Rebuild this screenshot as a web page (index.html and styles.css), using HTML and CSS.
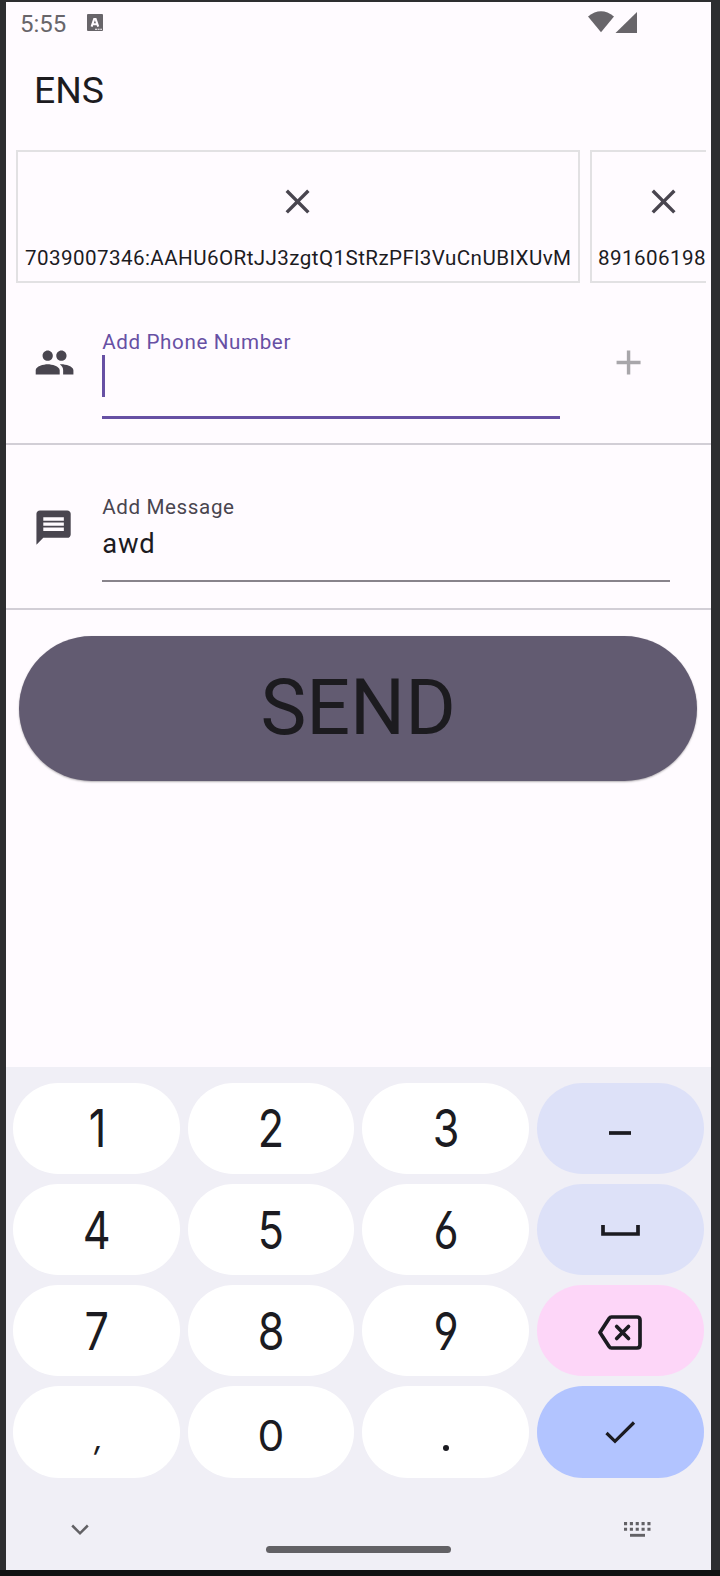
FILE: index.html
```html
<!DOCTYPE html>
<html lang="en">
<head>
<meta charset="utf-8">
<title>ENS</title>
<link rel="stylesheet" href="styles.css">
</head>
<body>
<main class="screen">
  <header class="status">
    <span class="clock">5:55</span>
    <svg class="badge" viewBox="0 0 16 17"><rect width="16" height="17" rx="1" fill="#68656a"/><path d="M4.600 12.600 7.200 5h1.400L11.200 12.600M5.800 10.200h4.200" fill="none" stroke="#fffbff" stroke-width="2.100"/><path d="M8 15.200h7" stroke="#fffbff" stroke-width="1.100" stroke-dasharray="2 .6"/></svg>
    <svg class="signals" viewBox="0 0 50 22"><path d="M0 5.500Q13-5 26 5.500L13 21.300z" fill="#68656a"/><path d="M49 1v21H27.500z" fill="#68656a"/></svg>
  </header>
  <h1 class="title">ENS</h1>
  <section class="tokens">
    <div class="token token-long">
      <svg class="icon" viewBox="0 0 24 24"><path d="M19 6.410 17.590 5 12 10.590 6.410 5 5 6.410 10.590 12 5 17.590 6.410 19 12 13.410 17.590 19 19 17.590 13.410 12z"/></svg>
      <span>7039007346:AAHU6ORtJJ3zgtQ1StRzPFl3VuCnUBIXUvM</span>
    </div>
    <div class="token token-short">
      <svg class="icon" viewBox="0 0 24 24"><path d="M19 6.410 17.590 5 12 10.590 6.410 5 5 6.410 10.590 12 5 17.590 6.410 19 12 13.410 17.590 19 19 17.590 13.410 12z"/></svg>
      <span>891606198</span>
    </div>
  </section>
  <section class="row row-phone">
    <svg class="icon" viewBox="0 0 24 24"><path d="M16 11c1.660 0 2.990-1.340 2.990-3S17.660 5 16 5s-3 1.340-3 3 1.340 3 3 3zm-8 0c1.660 0 2.990-1.340 2.990-3S9.660 5 8 5 5 6.340 5 8s1.340 3 3 3zm0 2c-2.330 0-7 1.170-7 3.500V19h14v-2.500c0-2.330-4.670-3.500-7-3.500zm8 0c-.290 0-.620.020-.970.050 1.160.840 1.970 1.970 1.970 3.450V19h6v-2.500c0-2.330-4.670-3.500-7-3.500z"/></svg>
    <div class="field focused">
      <label>Add Phone Number</label>
      <div class="caret"></div>
    </div>
    <svg class="icon add" viewBox="0 0 24 24"><path d="M19 13h-6v6h-2v-6H5v-2h6V5h2v6h6z"/></svg>
  </section>
  <section class="row row-message">
    <svg class="icon" viewBox="0 0 24 24"><path d="M20 2H4c-1.100 0-1.990.900-1.990 2L2 22l4-4h14c1.100 0 2-.900 2-2V4c0-1.100-.900-2-2-2zm-2 12H6v-2h12v2zm0-3H6V9h12v2zm0-3H6V6h12v2z"/></svg>
    <div class="field">
      <label>Add Message</label>
      <div class="value">awd</div>
    </div>
  </section>
  <button class="send">SEND</button>
  <section class="keyboard">
    <div class="keys">
      <div class="key"><span class="one">1</span></div><div class="key"><span>2</span></div><div class="key"><span>3</span></div>
      <div class="key tint"><svg width="22" height="4" class="dash"><path d="M0 2h22" stroke="#1b1b21" stroke-width="3.700"/></svg></div>
      <div class="key"><span>4</span></div><div class="key"><span>5</span></div><div class="key"><span>6</span></div>
      <div class="key tint"><svg class="space" width="39" height="11"><path d="M2 0v9h35V0" fill="none" stroke="#1b1b21" stroke-width="3.700"/></svg></div>
      <div class="key"><span>7</span></div><div class="key"><span>8</span></div><div class="key"><span>9</span></div>
      <div class="key pink"><svg class="erase" width="44" height="35" viewBox="0 0 44 35"><path d="M13.500 2H39q3 0 3 3v25q0 3-3 3H13.500q-1.500 0-2.400-1.400L2 17.500 11.100 3.400Q12 2 13.500 2z" fill="none" stroke="#1b1b21" stroke-width="3.700" stroke-linejoin="round"/><path d="m18.700 11.500 11.800 12m0-12-11.800 12" stroke="#1b1b21" stroke-width="3.700" stroke-linecap="round"/></svg></div>
      <div class="key"><span class="comma">,</span></div><div class="key"><span class="zero">0</span></div><div class="key"><i class="dot"></i></div>
      <div class="key blue"><svg width="31" height="24" viewBox="0 0 31 24"><path d="m1.500 13 8.500 8.300L29 2.500" fill="none" stroke="#1b1b21" stroke-width="3.200"/></svg></div>
    </div>
    <footer class="nav">
      <svg class="down" width="18" height="12"><path d="m1.200 1.500 7.800 7.800 7.800-7.800" fill="none" stroke="#626165" stroke-width="2.500"/></svg>
      <div class="home"></div>
      <svg class="layout" width="27" height="16"><path d="M0 1.600h27M0 7.200h27" stroke="#626165" stroke-width="3.100" stroke-dasharray="3.100 2.750"/><path d="M6 13.300h15" stroke="#626165" stroke-width="2.900"/></svg>
    </footer>
  </section>
</main>
<div class="edge"></div>
</body>
</html>
```
FILE: styles.css
```css
* { box-sizing: border-box; }
body {
  margin: 0;
  width: 720px;
  height: 1576px;
  padding-top: 2px;
  overflow: hidden;
  background: #2d2e30;
  font-family: Roboto, "Liberation Sans", sans-serif;
}
svg { display: block; flex: none; }
.screen {
  display: flex;
  flex-direction: column;
  width: 705px;
  height: 1568px;
  margin-left: 6px;
  background: #fffbff;
  color: #1c1b1f;
}
.edge { height: 6px; background: #101112; }
.status {
  display: flex;
  align-items: flex-start;
  height: 50px;
  padding: 9px 73px 0 14px;
  color: #68656a;
}
.clock { width: 67px; font-size: 24px; line-height: 27px; }
.badge { width: 16px; height: 17px; margin-top: 3px; }
.signals { width: 50px; height: 22px; margin-left: auto; }
.title {
  height: 98px;
  margin: 0;
  padding: 14px 0 0 28px;
  font-size: 37.300px;
  font-weight: 400;
  line-height: 48px;
}
.tokens {
  display: flex;
  gap: 10px;
  height: 133px;
  margin: 0 5px 1px 10px;
  overflow: hidden;
}
.token {
  display: flex;
  flex: none;
  flex-direction: column;
  align-items: center;
  padding-top: 29px;
  border: 2px solid #e2e1e3;
  font-size: 20.600px;
  line-height: 24px;
  letter-spacing: .420px;
  white-space: nowrap;
}
.token-long { width: 564px; }
.token-short { width: 148px; }
.token span { align-self: flex-start; margin: 24px 0 0 7px; }
.token-short span { margin-left: 6px; }
.icon { width: 41.140px; height: 41.140px; fill: #49454f; }
.row {
  display: flex;
  border-bottom: 2px solid #d2ced6;
  padding-left: 27.500px;
}
.row-phone { height: 161px; padding-top: 45px; }
.row-message { height: 165px; padding-top: 49px; }
.row > .icon { margin-top: 12.600px; }
.field {
  width: 568px;
  height: 89.500px;
  margin-left: 27.500px;
  border-bottom: 2px solid #88838b;
}
.field label {
  display: block;
  padding-top: 1px;
  font-size: 20.600px;
  line-height: 24px;
  letter-spacing: .630px;
  color: #49454f;
}
.row-message .field { height: 88px; }
.row-message > .icon { margin-left: -.500px; margin-right: .500px; }
.field.focused { width: 458px; border-bottom: 3.500px solid #6750a4; }
.focused label { color: #6750a4; }
.caret { width: 3px; height: 42px; margin-top: 1px; background: #6750a4; }
.row > .add { margin-left: 48px; fill: #a8a6aa; }
.value {
  margin-top: 9px;
  font-size: 27.400px;
  line-height: 32px;
  letter-spacing: .860px;
}
.send {
  width: 677.500px;
  height: 144.500px;
  margin: 26px 0 0 13.400px;
  padding: 0;
  border: 0;
  border-radius: 73px;
  background: #625b71;
  box-shadow: 0 1px 2px rgba(0, 0, 0, .3);
  color: #1c1b1f;
  font: 400 77.200px/90px Roboto, sans-serif;
}
.keyboard {
  height: 503px;
  margin-top: auto;
  padding: 15.700px 7.300px 0 7px;
  background: #f0eff6;
}
.keys {
  display: grid;
  grid-template-columns: repeat(4, 1fr);
  grid-auto-rows: 91.400px;
  gap: 9.800px 8px;
}
.key {
  display: flex;
  align-items: center;
  justify-content: center;
  border-radius: 46px;
  background: #fff;
  color: #1b1b21;
}
.key span {
  padding-top: 2px;
  font-family: Inter, sans-serif;
  font-size: 52px;
  line-height: 60px;
  font-feature-settings: "cv03", "cv04";
  transform: scaleX(.83);
}
.key .one { padding-left: 2px; }
.key .zero { padding-top: 8px; font-size: 42.500px; transform: none; }
.key .comma { padding: 12px 0 0 5px; font-size: 32px; font-style: italic; transform: none; }
.tint { background: #dde1f8; }
.pink { background: #fdd6f8; }
.blue { background: #b2c4ff; }
.dash { margin-top: 10px; }
.space { margin-top: 2px; }
.erase { margin: 4px 1px 0 0; }
.dot { width: 6px; height: 6px; margin-top: 32px; border-radius: 50%; background: #1b1b21; }
.nav {
  display: grid;
  grid-template-columns: 195px 185px 1fr;
  align-items: start;
  padding: 43px 0 0 58px;
}
.down { margin-top: 3px; }
.home { width: 185px; height: 7px; margin: 25px 0 0; border-radius: 4px; background: #626165; }
.layout { margin: 1px 0 0 173px; }
```
